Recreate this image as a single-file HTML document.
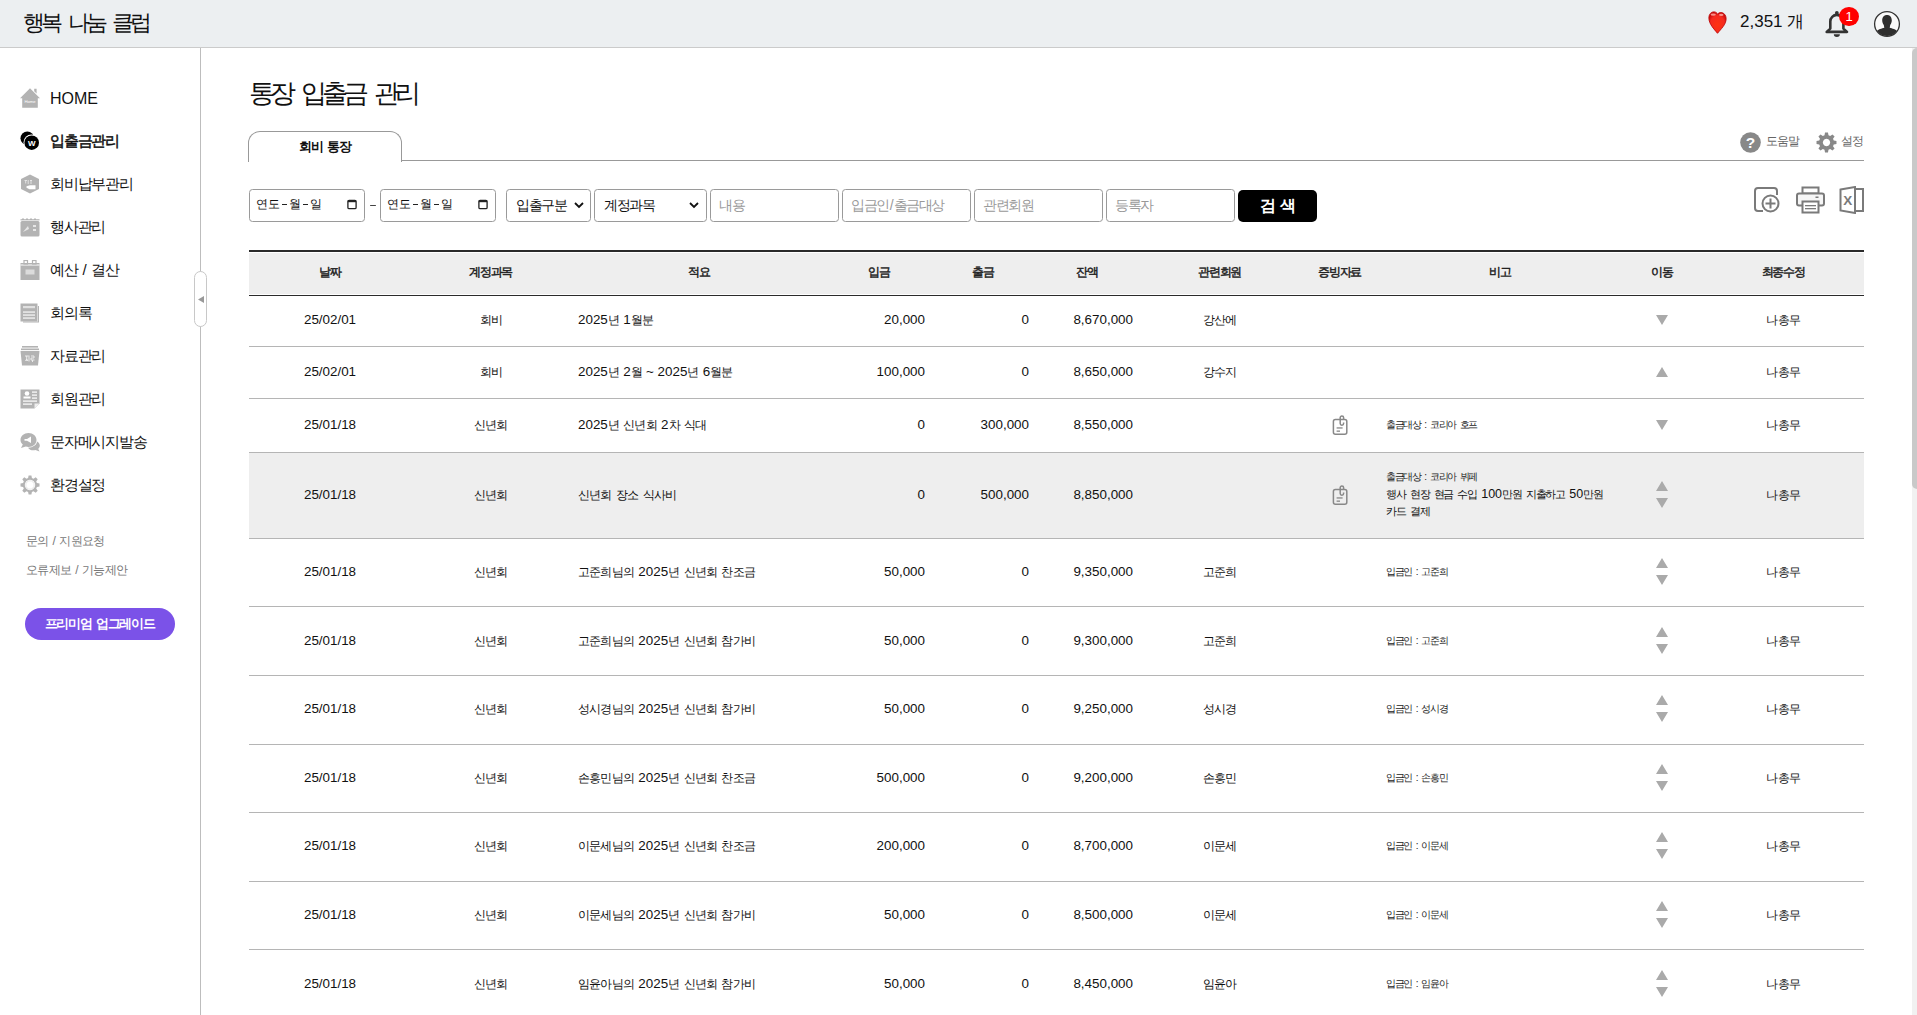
<!DOCTYPE html>
<html lang="ko">
<head>
<meta charset="utf-8">
<style>
*{box-sizing:border-box;margin:0;padding:0}
html,body{width:1917px;height:1015px;overflow:hidden;background:#fff}
body{font-family:"Liberation Sans",sans-serif;color:#111;position:relative}
.k{letter-spacing:var(--ls,-0.1em);margin-right:calc(var(--ls,-0.1em) * -0.6)}
.a{position:absolute;white-space:nowrap}
#top{position:absolute;left:0;top:0;width:1917px;height:48px;background:#eceff1;border-bottom:1px solid #cbcbcb}
#side{position:absolute;left:200px;top:48px;width:1px;height:967px;background:#bdbdbd}
.ic{position:absolute;left:20px;width:20px;height:20px}
.nt{position:absolute;left:50px;font-size:15px;--ls:-0.08em;line-height:20px;white-space:nowrap;color:#111}
.sub{position:absolute;left:26px;font-size:12px;--ls:-0.05em;line-height:16px;color:#777;white-space:nowrap}
#premium{position:absolute;left:25px;top:608px;width:150px;height:32px;border-radius:16px;background:#7b52e8;color:#fff;font-size:13px;font-weight:bold;text-align:center;line-height:32px}
#handle{position:absolute;left:194px;top:271px;width:13px;height:56px;border:1px solid #c8c8c8;border-radius:7px;background:#fff}
.inp{position:absolute;top:189px;height:33px;border:1px solid #9a9a9a;border-radius:3.5px;background:#fff;font-size:14px;line-height:31px;padding-left:8px;color:#999;white-space:nowrap}
#btn{position:absolute;left:1238px;top:190px;width:79px;height:32px;border-radius:5px;background:#000;color:#fff;font-size:16px;font-weight:bold;text-align:center;line-height:32px}
.hd{position:absolute;top:252px;height:41px;line-height:41px;font-size:12px;color:#222;text-align:center;-webkit-text-stroke:0.45px #222}
.c{position:absolute;font-size:13.4px;--ls:-0.065em;line-height:16px;color:#111;white-space:nowrap}
.ctr{text-align:center}
.c .k{font-size:0.88em}
.c.sm .k{font-size:1em}
.rt{text-align:right}
.line{position:absolute;left:249px;width:1615px;height:1px;background:#b5b5b5}
.hy{display:inline-block;width:9px;height:12px;position:relative;font-size:0;vertical-align:middle}
.hy::after{content:"";position:absolute;left:2px;top:5.5px;width:5px;height:1px;background:#222}
.sm{font-size:10px;line-height:14px;--ls:-0.13em}
</style>
</head>
<body>
<div id="top"></div>
<div class="a" style="left:23px;top:9px;font-size:22px;line-height:28px;color:#111;--ls:-0.18em"><span class="k">행복</span> <span class="k">나눔</span> <span class="k">클럽</span></div>
<svg class="a" style="left:1708px;top:11px" width="19" height="23" viewBox="0 0 19 23"><defs><radialGradient id="hg" cx="0.5" cy="0.6" r="0.6"><stop offset="0" stop-color="#ff3210"/><stop offset="0.7" stop-color="#f52a20"/><stop offset="1" stop-color="#c80a0a"/></radialGradient></defs><path d="M9.5 22.3 C6 18 0.9 13 0.9 7 C0.9 3.2 3 0.9 6 0.9 C7.8 0.9 9 1.9 9.6 3.2 C10.3 2.2 11.3 1.6 12.8 1.6 C15.8 1.6 18.1 4 18.1 7.8 C18.1 13.5 13 18 9.5 22.3Z" fill="url(#hg)" stroke="#c00808" stroke-width="0.9"/><ellipse cx="5.2" cy="3.6" rx="2.6" ry="1.2" fill="#ffb0a8" opacity="0.8"/><ellipse cx="13.3" cy="3.9" rx="2.2" ry="1.1" fill="#ffb0a8" opacity="0.8"/></svg>
<div class="a" style="left:1740px;top:11px;font-size:17px;line-height:22px;color:#111;--ls:-0.15em">2,351 <span class="k">개</span></div>
<svg class="a" style="left:1825px;top:10px" width="24" height="27" viewBox="0 0 24 27"><path d="M5.3 18.6 V11.45 A6.55 6.55 0 0 1 18.4 11.45 V18.6 L22 21.9 H1.7 Z" fill="none" stroke="#333" stroke-width="2.6" stroke-linejoin="round"/><circle cx="11.85" cy="2.9" r="1.9" fill="#333"/><path d="M8.8 24.3 H14.9 A3.05 2.6 0 0 1 8.8 24.3Z" fill="#333"/></svg>
<div class="a" style="left:1839px;top:6.5px;width:20px;height:19.5px;border-radius:50%;background:#ff0000;color:#fff;font-size:13px;line-height:20px;text-align:center">1</div>
<svg class="a" style="left:1873px;top:10px" width="28" height="28" viewBox="0 0 28 28"><circle cx="14" cy="14" r="12.4" fill="#fafafa" stroke="#333" stroke-width="1.3"/><clipPath id="uc"><circle cx="14" cy="14" r="12"/></clipPath><g clip-path="url(#uc)" fill="#2e2e2e"><path d="M14 5 C11 5 9.2 7.2 9.2 10.3 C9.2 12.2 9.8 13.8 10.8 15 L11.3 17.8 C9 18.6 5 19 3 22 L3 30 H25 V22 C23 19 19 18.6 16.7 17.8 L17.2 15 C18.2 13.8 18.8 12.2 18.8 10.3 C18.8 7.2 17 5 14 5Z"/></g></svg>
<div id="side"></div>
<div id="handle"></div>
<svg class="a" style="left:197px;top:295px" width="8" height="9" viewBox="0 0 8 9"><path d="M1 4.5 L7 1 L7 8Z" fill="#999"/></svg>
<div class="ic" style="top:88px"><svg width="20" height="20" viewBox="0 0 20 20"><path d="M10 0.3 L20 10.3 H17.8 V19.8 H2.2 V10.3 H0 Z" fill="#b3b3b3"/><path d="M14.2 0.8 H16.6 V5.5 L14.2 3.2Z" fill="#b3b3b3"/><text x="10" y="14.6" font-size="4.2" fill="#fff" text-anchor="middle" font-family="Liberation Sans">Home</text></svg></div>
<div class="nt" style="top:88px;font-size:16px;margin-top:1px;">HOME</div>
<div class="ic" style="top:131px"><svg width="20" height="20" viewBox="0 0 20 20"><circle cx="7.3" cy="7.3" r="6.8" fill="#000"/><circle cx="11.5" cy="11.5" r="8" fill="#fff"/><circle cx="11.7" cy="11.7" r="7.3" fill="#000"/><text x="11.7" y="14.6" font-size="8" font-weight="bold" fill="#fff" text-anchor="middle" font-family="Liberation Sans">W</text></svg></div>
<div class="nt" style="top:131px;-webkit-text-stroke:0.5px #111;"><span class="k">입출금관리</span></div>
<div class="ic" style="top:174px"><svg width="20" height="20" viewBox="0 0 20 20"><path d="M10 0.5 L19 5 V15 L10 19.5 L1 15 V5Z" fill="#b3b3b3"/><path d="M6.5 12.2 L10 11.2 H15.5 V15.2 H9.5 L6.5 13.8Z" fill="#fff"/><path d="M4.5 6.5h2.5M5.7 6.5v3M8.2 6v4M10 6.5h2M11 6v4" stroke="#eee" stroke-width="0.8" fill="none"/></svg></div>
<div class="nt" style="top:174px;"><span class="k">회비납부관리</span></div>
<div class="ic" style="top:217px"><svg width="20" height="20" viewBox="0 0 20 20"><rect x="0.5" y="4" width="19" height="15.5" rx="1.5" fill="#b3b3b3"/><rect x="0.5" y="2.2" width="19" height="1.2" fill="#b3b3b3"/><path d="M2 1.5h2v1.5h-2zM6 1.5h2v1.5h-2zM10 1.5h2v1.5h-2zM14 1.5h2v1.5h-2z" fill="#b3b3b3"/><path d="M3 15 L8 9 L9 12Z" fill="#e6e6e6"/><rect x="13" y="8" width="3" height="2" fill="#e6e6e6"/><rect x="13" y="12" width="3" height="2" fill="#e6e6e6"/></svg></div>
<div class="nt" style="top:217px;"><span class="k">행사관리</span></div>
<div class="ic" style="top:260px"><svg width="20" height="20" viewBox="0 0 20 20"><rect x="0.5" y="3" width="19" height="17" fill="#b3b3b3"/><rect x="0.5" y="4.5" width="19" height="1" fill="#fff"/><rect x="4" y="0.5" width="3.5" height="3.5" fill="none" stroke="#b3b3b3" stroke-width="1.2"/><rect x="12.5" y="0.5" width="3.5" height="3.5" fill="none" stroke="#b3b3b3" stroke-width="1.2"/><rect x="5.5" y="9.5" width="9" height="5" fill="#dcdcdc"/></svg></div>
<div class="nt" style="top:260px;"><span class="k">예산</span> / <span class="k">결산</span></div>
<div class="ic" style="top:303px"><svg width="20" height="20" viewBox="0 0 20 20"><path d="M19 3 V19.5 H3 V18.5 H18 V3Z" fill="#b3b3b3"/><rect x="0.5" y="0.5" width="17" height="18" fill="#b3b3b3"/><rect x="3" y="3" width="12" height="2.2" fill="#e0e0e0"/><rect x="3" y="8.5" width="12" height="1.1" fill="#fff"/><rect x="3" y="11.5" width="12" height="1.1" fill="#fff"/><rect x="3" y="14.5" width="12" height="1.1" fill="#fff"/></svg></div>
<div class="nt" style="top:303px;"><span class="k">회의록</span></div>
<div class="ic" style="top:346px"><svg width="20" height="20" viewBox="0 0 20 20"><rect x="2" y="0" width="16" height="1.6" fill="#b3b3b3"/><rect x="1" y="2.5" width="18" height="1.6" fill="#b3b3b3"/><path d="M0.5 5 H19.5 L18 19.5 H2Z" fill="#b3b3b3"/><path d="M5 10h3.5M6.7 10v5M5.5 15l1.2-2 1.2 2M9 9.5v6M11 10h3v2h-3v2h3.5M12.5 14v2" stroke="#f2f2f2" stroke-width="0.9" fill="none"/></svg></div>
<div class="nt" style="top:346px;"><span class="k">자료관리</span></div>
<div class="ic" style="top:389px"><svg width="20" height="20" viewBox="0 0 20 20"><path d="M0.5 0.5 H19.5 V14.5 L14.5 19.5 H0.5Z" fill="#b3b3b3"/><path d="M19.5 14.5 H14.5 V19.5Z" fill="#eee"/><circle cx="7" cy="4.5" r="2.3" fill="#fff"/><rect x="3.5" y="7.5" width="7" height="2" fill="#fff"/><rect x="12" y="2.5" width="5" height="1.2" fill="#fff"/><rect x="12" y="5.5" width="5" height="1.2" fill="#fff"/><rect x="12" y="8.5" width="5" height="1.2" fill="#fff"/><rect x="3" y="11.5" width="14" height="1.2" fill="#fff"/><rect x="3" y="14.5" width="9" height="1.2" fill="#fff"/></svg></div>
<div class="nt" style="top:389px;"><span class="k">회원관리</span></div>
<div class="ic" style="top:432px"><svg width="20" height="20" viewBox="0 0 20 20"><path d="M8.5 1 C13 1 16.5 4 16.5 8 C16.5 12 13 15 8.5 15 C7.5 15 6.6 14.8 5.8 14.5 L1 16 L2.8 12.5 C1.3 11.3 0.5 9.7 0.5 8 C0.5 4 4 1 8.5 1Z" fill="#b3b3b3"/><path d="M17 9.5 C18.8 10.5 19.8 12 19.8 13.5 C19.8 14.8 19.2 16 18.2 16.8 L19.5 19.5 L15.5 18 C14.8 18.2 14 18.3 13.3 18.3 C11 18.3 9 17.3 8 15.7 C13 15.5 16.8 13 17 9.5Z" fill="#b3b3b3"/><path d="M4.5 7 H7 L11 4.5 V11 L7 8.8 H4.5Z" fill="#fff"/></svg></div>
<div class="nt" style="top:432px;"><span class="k">문자메시지발송</span></div>
<div class="ic" style="top:475px"><svg width="20" height="20" viewBox="0 0 20 20"><path fill="#b3b3b3" fill-rule="evenodd" d="M8.6 0.5h2.8l0.5 2.6 1.6 0.7 2.2-1.5 2 2-1.5 2.2 0.7 1.6 2.6 0.5v2.8l-2.6 0.5-0.7 1.6 1.5 2.2-2 2-2.2-1.5-1.6 0.7-0.5 2.6H8.6l-0.5-2.6-1.6-0.7-2.2 1.5-2-2 1.5-2.2-0.7-1.6L0.5 11.4V8.6l2.6-0.5 0.7-1.6-1.5-2.2 2-2 2.2 1.5 1.6-0.7z M10 4.8a5.2 5.2 0 1 0 0.01 0z"/><circle cx="10" cy="10" r="4.2" fill="none" stroke="#e2e2e2" stroke-width="0.8"/></svg></div>
<div class="nt" style="top:475px;"><span class="k">환경설정</span></div>
<div class="sub" style="top:533px"><span class="k">문의</span> / <span class="k">지원요청</span></div>
<div class="sub" style="top:562px"><span class="k">오류제보</span> / <span class="k">기능제안</span></div>
<div id="premium"><span class="k">프리미엄</span> <span class="k">업그레이드</span></div>
<div class="a" style="left:248.5px;top:77px;font-size:26px;line-height:32px;color:#111;--ls:-0.19em"><span class="k">통장</span> <span class="k">입출금</span> <span class="k">관리</span></div>
<div class="a" style="left:248px;top:131px;width:154px;height:31px;border:1px solid #999;border-bottom:none;border-radius:12px 12px 0 0;background:#fff"></div>
<div class="a" style="left:248px;top:138px;width:154px;text-align:center;font-size:13px;font-weight:bold;line-height:18px"><span class="k">회비</span> <span class="k">통장</span></div>
<div class="a" style="left:401px;top:160px;width:1463px;height:1px;background:#999"></div>
<svg class="a" style="left:1740px;top:132px" width="21" height="21" viewBox="0 0 21 21"><circle cx="10.5" cy="10.5" r="10.3" fill="#888"/><text x="10.5" y="16.3" font-size="15.5" font-weight="bold" fill="#fff" text-anchor="middle" font-family="Liberation Sans">?</text></svg>
<div class="a" style="left:1766px;top:133px;font-size:12px;line-height:16px;color:#666"><span class="k">도움말</span></div>
<svg class="a" style="left:1816px;top:132px" width="21" height="21" viewBox="0 0 20 20"><path fill="#888" fill-rule="evenodd" d="M8.6 0.5h2.8l0.5 2.6 1.6 0.7 2.2-1.5 2 2-1.5 2.2 0.7 1.6 2.6 0.5v2.8l-2.6 0.5-0.7 1.6 1.5 2.2-2 2-2.2-1.5-1.6 0.7-0.5 2.6H8.6l-0.5-2.6-1.6-0.7-2.2 1.5-2-2 1.5-2.2-0.7-1.6L0.5 11.4V8.6l2.6-0.5 0.7-1.6-1.5-2.2 2-2 2.2 1.5 1.6-0.7z M10 6.5a3.5 3.5 0 1 0 0.01 0z"/></svg>
<div class="a" style="left:1841px;top:133px;font-size:12px;line-height:16px;color:#666"><span class="k">설정</span></div>
<div class="inp" style="left:249px;width:116px;color:#111;font-size:12px;padding-left:6px;line-height:29px;--ls:0em"><span class="k">연도</span><span class="hy">-</span><span class="k">월</span><span class="hy">-</span><span class="k">일</span></div>
<svg class="a" style="left:347px;top:199px" width="10" height="11" viewBox="0 0 10 11"><rect x="0.9" y="1.4" width="8.2" height="8.2" rx="1.2" fill="none" stroke="#222" stroke-width="1.3"/><rect x="0.9" y="1" width="8.2" height="2.2" fill="#222"/></svg>
<div class="a" style="left:369.5px;top:205px;width:6px;height:1.2px;background:#444;border-radius:1px"></div>
<div class="inp" style="left:380px;width:116px;color:#111;font-size:12px;padding-left:6px;line-height:29px;--ls:0em"><span class="k">연도</span><span class="hy">-</span><span class="k">월</span><span class="hy">-</span><span class="k">일</span></div>
<svg class="a" style="left:478px;top:199px" width="10" height="11" viewBox="0 0 10 11"><rect x="0.9" y="1.4" width="8.2" height="8.2" rx="1.2" fill="none" stroke="#222" stroke-width="1.3"/><rect x="0.9" y="1" width="8.2" height="2.2" fill="#222"/></svg>
<div class="inp" style="left:506px;width:85px;color:#111;font-size:14px;padding-left:9px"><span class="k">입출구분</span></div>
<svg class="a" style="left:574px;top:201px" width="10" height="8" viewBox="0 0 10 8"><path d="M1 2 L5 6 L9 2" fill="none" stroke="#111" stroke-width="1.8"/></svg>
<div class="inp" style="left:594px;width:113px;color:#111;font-size:14px;padding-left:9px"><span class="k">계정과목</span></div>
<svg class="a" style="left:689px;top:201px" width="10" height="8" viewBox="0 0 10 8"><path d="M1 2 L5 6 L9 2" fill="none" stroke="#111" stroke-width="1.8"/></svg>
<div class="inp" style="left:710px;width:129px;padding-left:8px"><span class="k">내용</span></div>
<div class="inp" style="left:842px;width:129px;padding-left:8px"><span class="k">입금인</span>/<span class="k">출금대상</span></div>
<div class="inp" style="left:974px;width:129px;padding-left:8px"><span class="k">관련회원</span></div>
<div class="inp" style="left:1106px;width:129px;padding-left:8px"><span class="k">등록자</span></div>
<div id="btn"><span class="k">검</span> <span class="k">색</span></div>
<svg class="a" style="left:1753px;top:186px" width="28" height="28" viewBox="0 0 28 28"><path d="M10 25 H5 C3.3 25 2 23.7 2 22 V5 C2 3.3 3.3 2 5 2 H21 C22.7 2 24 3.3 24 5 V9" fill="none" stroke="#7a7a7a" stroke-width="2"/><circle cx="17.5" cy="17.5" r="8" fill="#fff" stroke="#7a7a7a" stroke-width="2"/><path d="M17.5 12.5 V22.5 M12.5 17.5 H22.5" stroke="#7a7a7a" stroke-width="2"/></svg>
<svg class="a" style="left:1796px;top:186px" width="29" height="28" viewBox="0 0 29 28"><rect x="6.5" y="1.5" width="16" height="6" fill="none" stroke="#7a7a7a" stroke-width="2"/><rect x="1" y="7.5" width="27" height="12" rx="2" fill="#f6f6f6" stroke="#7a7a7a" stroke-width="2"/><rect x="19.5" y="10.5" width="3" height="1.5" fill="#7a7a7a"/><rect x="6.5" y="15.5" width="16" height="11" fill="#fff" stroke="#7a7a7a" stroke-width="2"/><rect x="9" y="19" width="11" height="1.3" fill="#7a7a7a"/><rect x="9" y="22" width="11" height="1.3" fill="#7a7a7a"/></svg>
<svg class="a" style="left:1839px;top:186px" width="26" height="28" viewBox="0 0 26 28"><path d="M1.5 3.5 L16 1 V27 L1.5 24.5Z" fill="none" stroke="#7a7a7a" stroke-width="2"/><path d="M17 3 H24 V25 H17" fill="none" stroke="#7a7a7a" stroke-width="2"/><text x="8.8" y="19.2" font-size="13.5" font-weight="bold" fill="#7a7a7a" text-anchor="middle" font-family="Liberation Sans">X</text></svg>
<div class="a" style="left:249px;top:250px;width:1615px;height:2px;background:#2a2a2a"></div>
<div class="a" style="left:249px;top:253px;width:1615px;height:41px;background:#eeeeee"></div>
<div class="a" style="left:249px;top:295px;width:1615px;height:1px;background:#2a2a2a"></div>
<div class="hd" style="left:249px;width:162px"><span class="k">날짜</span></div>
<div class="hd" style="left:411px;width:160px"><span class="k">계정과목</span></div>
<div class="hd" style="left:571px;width:256px"><span class="k">적요</span></div>
<div class="hd" style="left:827px;width:104px"><span class="k">입금</span></div>
<div class="hd" style="left:931px;width:104px"><span class="k">출금</span></div>
<div class="hd" style="left:1035px;width:104px"><span class="k">잔액</span></div>
<div class="hd" style="left:1139px;width:162px"><span class="k">관련회원</span></div>
<div class="hd" style="left:1301px;width:78px"><span class="k">증빙자료</span></div>
<div class="hd" style="left:1379px;width:242px"><span class="k">비고</span></div>
<div class="hd" style="left:1621px;width:82px"><span class="k">이동</span></div>
<div class="hd" style="left:1703px;width:161px"><span class="k">최종수정</span></div>
<div class="line" style="top:346px"></div>
<div class="c ctr" style="left:249px;width:162px;top:312px">25/02/01</div>
<div class="c ctr" style="left:411px;width:160px;top:312px"><span class="k">회비</span></div>
<div class="c" style="left:578px;top:312px">2025<span class="k">년</span> 1<span class="k">월분</span></div>
<div class="c rt" style="left:827px;width:98px;top:312px">20,000</div>
<div class="c rt" style="left:931px;width:98px;top:312px">0</div>
<div class="c rt" style="left:1035px;width:98px;top:312px">8,670,000</div>
<div class="c ctr" style="left:1139px;width:162px;top:312px"><span class="k">강산에</span></div>
<svg class="a" style="left:1656px;top:315px" width="12" height="10" viewBox="0 0 12 10"><path d="M0 0H12L6 10Z" fill="#aaa"/></svg>
<div class="c ctr" style="left:1703px;width:161px;top:312px"><span class="k">나총무</span></div>
<div class="line" style="top:398px"></div>
<div class="c ctr" style="left:249px;width:162px;top:364px">25/02/01</div>
<div class="c ctr" style="left:411px;width:160px;top:364px"><span class="k">회비</span></div>
<div class="c" style="left:578px;top:364px">2025<span class="k">년</span> 2<span class="k">월</span> ~ 2025<span class="k">년</span> 6<span class="k">월분</span></div>
<div class="c rt" style="left:827px;width:98px;top:364px">100,000</div>
<div class="c rt" style="left:931px;width:98px;top:364px">0</div>
<div class="c rt" style="left:1035px;width:98px;top:364px">8,650,000</div>
<div class="c ctr" style="left:1139px;width:162px;top:364px"><span class="k">강수지</span></div>
<svg class="a" style="left:1656px;top:367px" width="12" height="10" viewBox="0 0 12 10"><path d="M0 10H12L6 0Z" fill="#aaa"/></svg>
<div class="c ctr" style="left:1703px;width:161px;top:364px"><span class="k">나총무</span></div>
<div class="line" style="top:452px"></div>
<div class="c ctr" style="left:249px;width:162px;top:417px">25/01/18</div>
<div class="c ctr" style="left:411px;width:160px;top:417px"><span class="k">신년회</span></div>
<div class="c" style="left:578px;top:417px">2025<span class="k">년</span> <span class="k">신년회</span> 2<span class="k">차</span> <span class="k">식대</span></div>
<div class="c rt" style="left:827px;width:98px;top:417px">0</div>
<div class="c rt" style="left:931px;width:98px;top:417px">300,000</div>
<div class="c rt" style="left:1035px;width:98px;top:417px">8,550,000</div>
<div class="a" style="left:1332px;top:415px;width:16px;height:20px"><svg width="16" height="20" viewBox="0 0 16 20"><rect x="1.4" y="4.4" width="13.4" height="14.8" rx="2" fill="none" stroke="#888" stroke-width="1.5"/><path d="M8.2 4.4 V2.6 C8.2 1.6 8.9 1.1 9.9 1.1 C10.9 1.1 11.6 1.6 11.6 2.6 V4.4" fill="none" stroke="#888" stroke-width="1.5"/><path d="M8.2 4.4 V8.6 C8.2 9.6 8.9 10.2 9.9 10.2 C10.9 10.2 11.6 9.6 11.6 8.6 V7.6" fill="none" stroke="#888" stroke-width="1.5"/><rect x="4.6" y="12.3" width="6" height="1.3" fill="#888"/><rect x="4.6" y="15.5" width="3.4" height="1.3" fill="#888"/></svg></div>
<div class="c sm" style="left:1386px;top:418px;color:#222"><span class="k">출금대상</span> : <span class="k">코리아</span> <span class="k">호프</span></div>
<svg class="a" style="left:1656px;top:420px" width="12" height="10" viewBox="0 0 12 10"><path d="M0 0H12L6 10Z" fill="#aaa"/></svg>
<div class="c ctr" style="left:1703px;width:161px;top:417px"><span class="k">나총무</span></div>
<div class="a" style="left:249px;top:453px;width:1615px;height:85px;background:#eeeeee"></div>
<div class="line" style="top:538px"></div>
<div class="c ctr" style="left:249px;width:162px;top:487px">25/01/18</div>
<div class="c ctr" style="left:411px;width:160px;top:487px"><span class="k">신년회</span></div>
<div class="c" style="left:578px;top:487px"><span class="k">신년회</span> <span class="k">장소</span> <span class="k">식사비</span></div>
<div class="c rt" style="left:827px;width:98px;top:487px">0</div>
<div class="c rt" style="left:931px;width:98px;top:487px">500,000</div>
<div class="c rt" style="left:1035px;width:98px;top:487px">8,850,000</div>
<div class="a" style="left:1332px;top:485px;width:16px;height:20px"><svg width="16" height="20" viewBox="0 0 16 20"><rect x="1.4" y="4.4" width="13.4" height="14.8" rx="2" fill="none" stroke="#888" stroke-width="1.5"/><path d="M8.2 4.4 V2.6 C8.2 1.6 8.9 1.1 9.9 1.1 C10.9 1.1 11.6 1.6 11.6 2.6 V4.4" fill="none" stroke="#888" stroke-width="1.5"/><path d="M8.2 4.4 V8.6 C8.2 9.6 8.9 10.2 9.9 10.2 C10.9 10.2 11.6 9.6 11.6 8.6 V7.6" fill="none" stroke="#888" stroke-width="1.5"/><rect x="4.6" y="12.3" width="6" height="1.3" fill="#888"/><rect x="4.6" y="15.5" width="3.4" height="1.3" fill="#888"/></svg></div>
<div class="c sm" style="left:1386px;top:470px;color:#222"><span class="k">출금대상</span> : <span class="k">코리아</span> <span class="k">뷔페</span></div>
<div class="c" style="left:1386px;top:486px;font-size:12.5px;line-height:17px;--ls:-0.11em"><span class="k">행사</span> <span class="k">현장</span> <span class="k">현금</span> <span class="k">수입</span> 100<span class="k">만원</span> <span class="k">지출하고</span> 50<span class="k">만원</span></div>
<div class="c" style="left:1386px;top:503px;font-size:12.5px;line-height:17px;--ls:-0.11em"><span class="k">카드</span> <span class="k">결제</span></div>
<svg class="a" style="left:1656px;top:481px" width="12" height="27" viewBox="0 0 12 27"><path d="M0 10H12L6 0Z M0 17H12L6 27Z" fill="#aaa"/></svg>
<div class="c ctr" style="left:1703px;width:161px;top:487px"><span class="k">나총무</span></div>
<div class="line" style="top:606px"></div>
<div class="c ctr" style="left:249px;width:162px;top:564px">25/01/18</div>
<div class="c ctr" style="left:411px;width:160px;top:564px"><span class="k">신년회</span></div>
<div class="c" style="left:578px;top:564px"><span class="k">고준희님의</span> 2025<span class="k">년</span> <span class="k">신년회</span> <span class="k">찬조금</span></div>
<div class="c rt" style="left:827px;width:98px;top:564px">50,000</div>
<div class="c rt" style="left:931px;width:98px;top:564px">0</div>
<div class="c rt" style="left:1035px;width:98px;top:564px">9,350,000</div>
<div class="c ctr" style="left:1139px;width:162px;top:564px"><span class="k">고준희</span></div>
<div class="c sm" style="left:1386px;top:565px;color:#222"><span class="k">입금인</span> : <span class="k">고준희</span></div>
<svg class="a" style="left:1656px;top:558px" width="12" height="27" viewBox="0 0 12 27"><path d="M0 10H12L6 0Z M0 17H12L6 27Z" fill="#aaa"/></svg>
<div class="c ctr" style="left:1703px;width:161px;top:564px"><span class="k">나총무</span></div>
<div class="line" style="top:675px"></div>
<div class="c ctr" style="left:249px;width:162px;top:633px">25/01/18</div>
<div class="c ctr" style="left:411px;width:160px;top:633px"><span class="k">신년회</span></div>
<div class="c" style="left:578px;top:633px"><span class="k">고준희님의</span> 2025<span class="k">년</span> <span class="k">신년회</span> <span class="k">참가비</span></div>
<div class="c rt" style="left:827px;width:98px;top:633px">50,000</div>
<div class="c rt" style="left:931px;width:98px;top:633px">0</div>
<div class="c rt" style="left:1035px;width:98px;top:633px">9,300,000</div>
<div class="c ctr" style="left:1139px;width:162px;top:633px"><span class="k">고준희</span></div>
<div class="c sm" style="left:1386px;top:634px;color:#222"><span class="k">입금인</span> : <span class="k">고준희</span></div>
<svg class="a" style="left:1656px;top:627px" width="12" height="27" viewBox="0 0 12 27"><path d="M0 10H12L6 0Z M0 17H12L6 27Z" fill="#aaa"/></svg>
<div class="c ctr" style="left:1703px;width:161px;top:633px"><span class="k">나총무</span></div>
<div class="line" style="top:744px"></div>
<div class="c ctr" style="left:249px;width:162px;top:701px">25/01/18</div>
<div class="c ctr" style="left:411px;width:160px;top:701px"><span class="k">신년회</span></div>
<div class="c" style="left:578px;top:701px"><span class="k">성시경님의</span> 2025<span class="k">년</span> <span class="k">신년회</span> <span class="k">참가비</span></div>
<div class="c rt" style="left:827px;width:98px;top:701px">50,000</div>
<div class="c rt" style="left:931px;width:98px;top:701px">0</div>
<div class="c rt" style="left:1035px;width:98px;top:701px">9,250,000</div>
<div class="c ctr" style="left:1139px;width:162px;top:701px"><span class="k">성시경</span></div>
<div class="c sm" style="left:1386px;top:702px;color:#222"><span class="k">입금인</span> : <span class="k">성시경</span></div>
<svg class="a" style="left:1656px;top:695px" width="12" height="27" viewBox="0 0 12 27"><path d="M0 10H12L6 0Z M0 17H12L6 27Z" fill="#aaa"/></svg>
<div class="c ctr" style="left:1703px;width:161px;top:701px"><span class="k">나총무</span></div>
<div class="line" style="top:812px"></div>
<div class="c ctr" style="left:249px;width:162px;top:770px">25/01/18</div>
<div class="c ctr" style="left:411px;width:160px;top:770px"><span class="k">신년회</span></div>
<div class="c" style="left:578px;top:770px"><span class="k">손흥민님의</span> 2025<span class="k">년</span> <span class="k">신년회</span> <span class="k">찬조금</span></div>
<div class="c rt" style="left:827px;width:98px;top:770px">500,000</div>
<div class="c rt" style="left:931px;width:98px;top:770px">0</div>
<div class="c rt" style="left:1035px;width:98px;top:770px">9,200,000</div>
<div class="c ctr" style="left:1139px;width:162px;top:770px"><span class="k">손흥민</span></div>
<div class="c sm" style="left:1386px;top:771px;color:#222"><span class="k">입금인</span> : <span class="k">손흥민</span></div>
<svg class="a" style="left:1656px;top:764px" width="12" height="27" viewBox="0 0 12 27"><path d="M0 10H12L6 0Z M0 17H12L6 27Z" fill="#aaa"/></svg>
<div class="c ctr" style="left:1703px;width:161px;top:770px"><span class="k">나총무</span></div>
<div class="line" style="top:881px"></div>
<div class="c ctr" style="left:249px;width:162px;top:838px">25/01/18</div>
<div class="c ctr" style="left:411px;width:160px;top:838px"><span class="k">신년회</span></div>
<div class="c" style="left:578px;top:838px"><span class="k">이문세님의</span> 2025<span class="k">년</span> <span class="k">신년회</span> <span class="k">찬조금</span></div>
<div class="c rt" style="left:827px;width:98px;top:838px">200,000</div>
<div class="c rt" style="left:931px;width:98px;top:838px">0</div>
<div class="c rt" style="left:1035px;width:98px;top:838px">8,700,000</div>
<div class="c ctr" style="left:1139px;width:162px;top:838px"><span class="k">이문세</span></div>
<div class="c sm" style="left:1386px;top:839px;color:#222"><span class="k">입금인</span> : <span class="k">이문세</span></div>
<svg class="a" style="left:1656px;top:832px" width="12" height="27" viewBox="0 0 12 27"><path d="M0 10H12L6 0Z M0 17H12L6 27Z" fill="#aaa"/></svg>
<div class="c ctr" style="left:1703px;width:161px;top:838px"><span class="k">나총무</span></div>
<div class="line" style="top:949px"></div>
<div class="c ctr" style="left:249px;width:162px;top:907px">25/01/18</div>
<div class="c ctr" style="left:411px;width:160px;top:907px"><span class="k">신년회</span></div>
<div class="c" style="left:578px;top:907px"><span class="k">이문세님의</span> 2025<span class="k">년</span> <span class="k">신년회</span> <span class="k">참가비</span></div>
<div class="c rt" style="left:827px;width:98px;top:907px">50,000</div>
<div class="c rt" style="left:931px;width:98px;top:907px">0</div>
<div class="c rt" style="left:1035px;width:98px;top:907px">8,500,000</div>
<div class="c ctr" style="left:1139px;width:162px;top:907px"><span class="k">이문세</span></div>
<div class="c sm" style="left:1386px;top:908px;color:#222"><span class="k">입금인</span> : <span class="k">이문세</span></div>
<svg class="a" style="left:1656px;top:901px" width="12" height="27" viewBox="0 0 12 27"><path d="M0 10H12L6 0Z M0 17H12L6 27Z" fill="#aaa"/></svg>
<div class="c ctr" style="left:1703px;width:161px;top:907px"><span class="k">나총무</span></div>
<div class="line" style="top:1018px"></div>
<div class="c ctr" style="left:249px;width:162px;top:976px">25/01/18</div>
<div class="c ctr" style="left:411px;width:160px;top:976px"><span class="k">신년회</span></div>
<div class="c" style="left:578px;top:976px"><span class="k">임윤아님의</span> 2025<span class="k">년</span> <span class="k">신년회</span> <span class="k">참가비</span></div>
<div class="c rt" style="left:827px;width:98px;top:976px">50,000</div>
<div class="c rt" style="left:931px;width:98px;top:976px">0</div>
<div class="c rt" style="left:1035px;width:98px;top:976px">8,450,000</div>
<div class="c ctr" style="left:1139px;width:162px;top:976px"><span class="k">임윤아</span></div>
<div class="c sm" style="left:1386px;top:977px;color:#222"><span class="k">입금인</span> : <span class="k">임윤아</span></div>
<svg class="a" style="left:1656px;top:970px" width="12" height="27" viewBox="0 0 12 27"><path d="M0 10H12L6 0Z M0 17H12L6 27Z" fill="#aaa"/></svg>
<div class="c ctr" style="left:1703px;width:161px;top:976px"><span class="k">나총무</span></div>
<div class="a" style="left:1912px;top:48px;width:5px;height:967px;background:#f1f1f1"></div>
<div class="a" style="left:1912px;top:48px;width:10px;height:441px;background:#c9c9c9;border-radius:5px"></div>
</body>
</html>
